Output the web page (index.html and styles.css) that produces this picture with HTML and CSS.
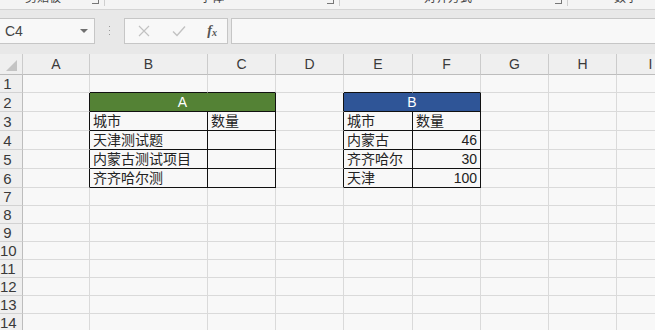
FILE: index.html
```html
<!DOCTYPE html>
<html lang="zh-CN">
<head>
    <meta charset="utf-8">
    <title>工作簿 - Excel</title>
    <link rel="stylesheet" href="styles.css">
</head>
<body>
<div class="ribbon">
    <div class="group g1"><span class="glabel">剪贴板</span><span class="launch"></span></div>
    <div class="group g2"><span class="glabel">字体</span><span class="launch"></span></div>
    <div class="group g3"><span class="glabel">对齐方式</span><span class="launch"></span></div>
    <div class="group g4"><span class="glabel">数字</span></div>
</div>

<div class="fbar">
    <div class="namebox">
        <span>C4</span>
        <span class="drop"></span>
    </div>
    <div class="grip">
        <svg width="3" height="12" viewBox="0 0 3 12"><rect x="1" y="1" width="1" height="1" fill="#9a9a9a"/><rect x="1" y="5" width="1" height="1" fill="#9a9a9a"/><rect x="1" y="9" width="1" height="1" fill="#9a9a9a"/></svg>
    </div>
    <div class="fxbox">
        <svg width="12" height="12" viewBox="0 0 12 12"><path d="M1 1 L11 11 M11 1 L1 11" stroke="#c2c2c2" stroke-width="1.2" fill="none"/></svg>
        <svg width="14" height="12" viewBox="0 0 14 12"><path d="M1 6.5 L5 10.5 L13 1.5" stroke="#c2c2c2" stroke-width="1.4" fill="none"/></svg>
        <span class="fx">f<sub>x</sub></span>
    </div>
    <div class="formula"></div>
</div>

<div class="sheet">
<table class="grid">
    <colgroup>
        <col class="c-row">
        <col class="c-std">
        <col class="c-wide">
        <col class="c-std1">
        <col class="c-std1">
        <col class="c-e">
        <col class="c-std1">
        <col class="c-std1">
        <col class="c-std1">
        <col class="c-std1">
    </colgroup>
    <tr class="head">
        <th class="corner"><svg width="11" height="11" viewBox="0 0 11 11"><polygon points="11,0 11,11 0,11" fill="#c4c4c4"/></svg></th>
        <th>A</th><th>B</th><th>C</th><th>D</th><th>E</th><th>F</th><th>G</th><th>H</th><th>I</th>
    </tr>
    <tr>
        <th class="rh">1</th>
        <td></td><td class="top"></td><td class="top"></td><td></td><td class="top"></td><td class="top"></td><td></td><td></td><td></td>
    </tr>
    <tr>
        <th class="rh">2</th>
        <td class="left"></td><td class="box title green" colspan="2">A</td><td class="left"></td><td class="box title blue" colspan="2">B</td><td></td><td></td><td></td>
    </tr>
    <tr>
        <th class="rh">3</th>
        <td class="left"></td><td class="box">城市</td><td class="box">数量</td><td class="left"></td><td class="box">城市</td><td class="box">数量</td><td></td><td></td><td></td>
    </tr>
    <tr>
        <th class="rh">4</th>
        <td class="left"></td><td class="box">天津测试题</td><td class="box"></td><td class="left"></td><td class="box">内蒙古</td><td class="box num">46</td><td></td><td></td><td></td>
    </tr>
    <tr>
        <th class="rh">5</th>
        <td class="left"></td><td class="box">内蒙古测试项目</td><td class="box"></td><td class="left"></td><td class="box">齐齐哈尔</td><td class="box num">30</td><td></td><td></td><td></td>
    </tr>
    <tr>
        <th class="rh">6</th>
        <td class="left"></td><td class="box">齐齐哈尔测</td><td class="box"></td><td class="left"></td><td class="box">天津</td><td class="box num">100</td><td></td><td></td><td></td>
    </tr>
    <tr><th class="rh">7</th><td></td><td></td><td></td><td></td><td></td><td></td><td></td><td></td><td></td></tr>
    <tr><th class="rh">8</th><td></td><td></td><td></td><td></td><td></td><td></td><td></td><td></td><td></td></tr>
    <tr><th class="rh">9</th><td></td><td></td><td></td><td></td><td></td><td></td><td></td><td></td><td></td></tr>
    <tr><th class="rh">10</th><td></td><td></td><td></td><td></td><td></td><td></td><td></td><td></td><td></td></tr>
    <tr><th class="rh">11</th><td></td><td></td><td></td><td></td><td></td><td></td><td></td><td></td><td></td></tr>
    <tr><th class="rh">12</th><td></td><td></td><td></td><td></td><td></td><td></td><td></td><td></td><td></td></tr>
    <tr><th class="rh">13</th><td></td><td></td><td></td><td></td><td></td><td></td><td></td><td></td><td></td></tr>
    <tr><th class="rh">14</th><td></td><td></td><td></td><td></td><td></td><td></td><td></td><td></td><td></td></tr>
    <tr><th class="rh">15</th><td></td><td></td><td></td><td></td><td></td><td></td><td></td><td></td><td></td></tr>
</table>
</div>
</body>
</html>
```

FILE: styles.css
```css
body {
    margin: 0;
    background-color: #e8e8e8;
    font-family: "Liberation Sans", "Noto Sans CJK SC", sans-serif;
    color: #222;
    overflow: hidden;
}

/* ribbon, only the bottom edge is visible */
.ribbon {
    display: flex;
    height: 9px;
    overflow: hidden;
    background-color: #f4f4f4;
    border-bottom: 1px solid #d4d4d4;
}
.group {
    display: flex;
    align-items: flex-start;
    border-right: 1px solid #cfcfcf;
    height: 6px;
    position: relative;
}
.g1 { width: 104px; }
.g2 { width: 234px; }
.g3 { width: 227px; }
.g4 { flex: 1; border-right: none; }
.glabel {
    font-size: 12px;
    line-height: 12px;
    margin-top: -8px;
    color: #444;
    white-space: nowrap;
}
.g1 .glabel { margin-left: 25px; }
.g2 .glabel { margin-left: 95px; }
.g3 .glabel { margin-left: 84px; }
.g4 .glabel { margin-left: 46px; }
.launch {
    margin-left: auto;
    margin-right: 5px;
    width: 6px;
    height: 3px;
    border-right: 1px solid #777;
    border-bottom: 1px solid #777;
}

/* name box + formula bar */
.fbar {
    display: flex;
    align-items: stretch;
    height: 26px;
    padding: 8px 0 10px;
}
.namebox {
    width: 95px;
    display: flex;
    align-items: center;
    justify-content: space-between;
    background-color: #f8f8f8;
    border: 1px solid #c6c6c6;
    border-left: none;
    box-sizing: border-box;
    padding: 0 5px;
    font-size: 14px;
    color: #444;
}
.drop {
    width: 0;
    height: 0;
    border-left: 4px solid transparent;
    border-right: 4px solid transparent;
    border-top: 4px solid #707070;
    margin-right: 1px;
}
.grip {
    width: 29px;
    display: flex;
    align-items: center;
    justify-content: center;
}
.fxbox {
    width: 104px;
    box-sizing: border-box;
    display: flex;
    align-items: center;
    justify-content: space-between;
    padding: 0 10px 0 13px;
    background-color: #f8f8f8;
    border: 1px solid #c6c6c6;
}
.fx {
    font-family: "Liberation Serif", serif;
    font-style: italic;
    font-weight: bold;
    font-size: 14px;
    color: #555;
}
.fx sub {
    font-size: 10px;
    vertical-align: -1px;
}
.formula {
    flex: 1;
    margin-left: 3px;
    background-color: #f8f8f8;
    border: 1px solid #c6c6c6;
    border-right: none;
}

/* worksheet */
.sheet {
    overflow: hidden;
    height: 276px;
}
.grid {
    table-layout: fixed;
    border-spacing: 0;
    width: 665px;
    background-color: #f8f8f8;
}
.c-row { width: 23px; }
.c-std { width: 67px; }
.c-wide { width: 118px; }
.c-std1 { width: 68px; }
.c-e { width: 69px; }

.grid td, .grid th {
    height: 17px;
    padding: 0 3px;
    line-height: 17px;
    font-size: 14px;
    font-weight: normal;
    white-space: nowrap;
    overflow: hidden;
    border-right: 1px solid #dadada;
    border-bottom: 1px solid #dadada;
}
.grid .head th {
    background-color: #efefef;
    color: #3a3a3a;
    text-align: center;
    border-right: 1px solid #cbcbcb;
    border-bottom: 1px solid #bdbdbd;
    padding: 0;
}
.grid .head .corner {
    text-align: right;
    vertical-align: bottom;
    line-height: 0;
    padding: 0 5px 3px 0;
}
.grid .rh {
    background-color: #efefef;
    color: #3a3a3a;
    text-align: center;
    padding: 0 7px 0 0;
    border-right: 1px solid #bdbdbd;
    border-bottom: 1px solid #d2d2d2;
    font-size: 15px;
}

.grid .box {
    border-right-color: #111;
    border-bottom-color: #111;
    padding-top: 1px;
    height: 16px;
}
.grid .left { border-right-color: #111; }
.grid .top { border-bottom-color: #111; }
.grid .title {
    color: #fff;
    text-align: center;
}
.green { background-color: #548235; }
.blue { background-color: #2f5597; }
.grid .num { text-align: right; }
```
